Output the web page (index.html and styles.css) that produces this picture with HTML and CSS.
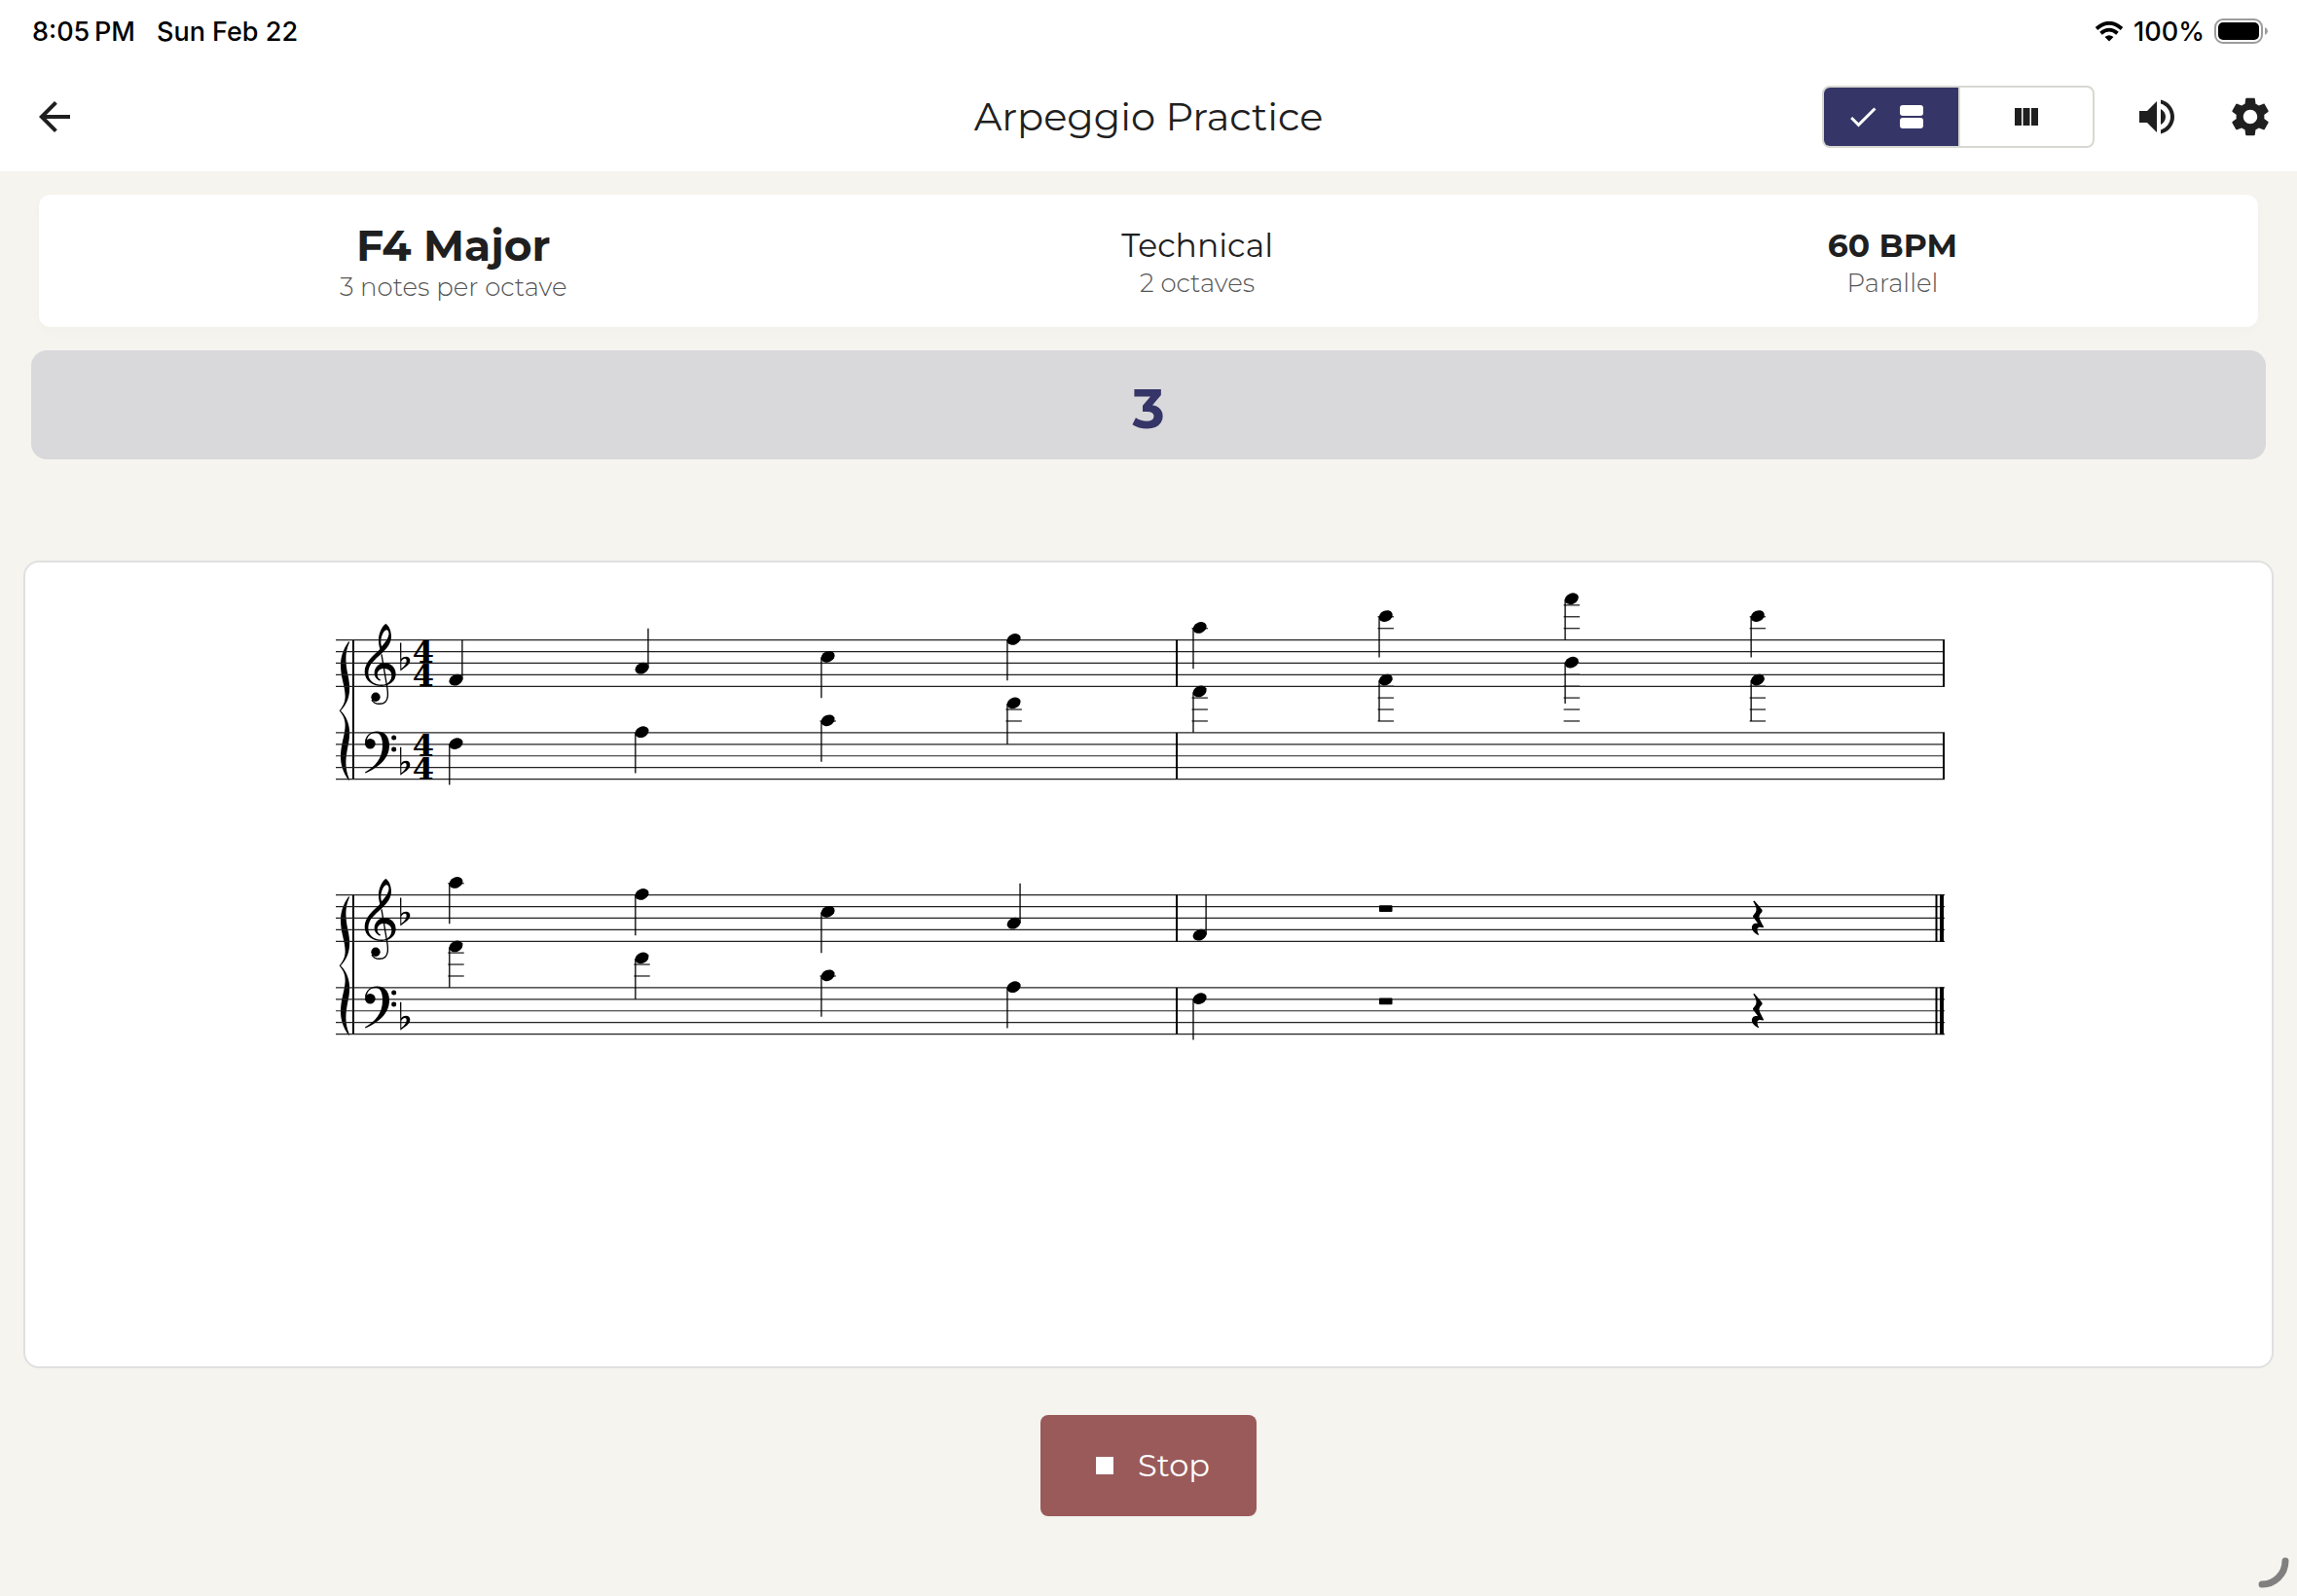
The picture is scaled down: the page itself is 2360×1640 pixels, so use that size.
FILE: index.html
```
<!DOCTYPE html>
<html lang="en">

<head>
    <meta charset="UTF-8">
    <meta name="viewport" content="width=device-width, initial-scale=1.0">
    <title>Arpeggio Practice</title>
    <link rel="stylesheet" href="styles.css">
</head>

<body>
    <!-- Status bar -->
    <div class="status-bar">
        <div class="status-left">
            <span>8:05&#8239;PM</span>
            <span>Sun Feb 22</span>
        </div>
        <div class="status-right">
            <svg class="wifi" viewBox="0 0 30 21" aria-hidden="true">
                <path d="M2 7.500Q15 -4 28 7.500M6.500 12.300Q15 5 23.500 12.300" fill="none" stroke="#000" stroke-width="3.800"/>
                <path d="M15 20.500l-4.500-4.500q4.500-3.500 9 0z"/>
            </svg>
            <span>100%</span>
            <svg class="battery" viewBox="0 0 56 26" aria-hidden="true">
                <rect x="1" y="1" width="48" height="24" rx="8" fill="none" stroke="#9c9c9c" stroke-width="2"/>
                <rect x="4" y="4" width="42" height="18" rx="5"/>
                <path d="M52 9q3 1.500 3 4t-3 4z" fill="#9c9c9c"/>
            </svg>
        </div>
    </div>

    <!-- App bar -->
    <header class="app-bar">
        <div class="bar-side">
            <button class="icon-button back" aria-label="Back">
                <svg class="icon" viewBox="0 0 24 24"><path d="M7.825 13l5.600 5.600L12 20l-8-8 8-8 1.425 1.400L7.825 11H20v2z"/></svg>
            </button>
        </div>
        <h1>Arpeggio Practice</h1>
        <div class="bar-side bar-actions">
            <div class="segmented" role="group" aria-label="Layout">
                <button class="segment selected" aria-pressed="true" aria-label="Staff view">
                    <svg class="check" viewBox="0 0 24 24"><path d="M9 16.170L4.830 12l-1.420 1.410L9 19 21 7l-1.410-1.410z"/></svg>
                    <svg class="view-icon" viewBox="0 0 24 24"><rect width="24" height="11" rx="3"/><rect y="13" width="24" height="11" rx="3"/></svg>
                </button>
                <button class="segment" aria-pressed="false" aria-label="Keyboard view">
                    <svg class="view-icon" viewBox="0 0 24 24"><path d="M0 3h7v18H0zM8.500 3h7v18h-7zM17 3h7v18h-7z"/></svg>
                </button>
            </div>
            <button class="icon-button" aria-label="Sound">
                <svg class="icon" viewBox="0 0 24 24"><path d="M3 9v6h4l5 5V4L7 9H3zm13.500 3c0-1.770-1.020-3.290-2.500-4.030v8.050c1.480-.730 2.500-2.250 2.500-4.020zM14 3.230v2.060c2.890.860 5 3.540 5 6.710s-2.110 5.850-5 6.710v2.060c4.010-.910 7-4.490 7-8.770s-2.990-7.860-7-8.770z"/></svg>
            </button>
            <button class="icon-button" aria-label="Settings">
                <svg class="icon" viewBox="0 0 24 24"><path d="M19.140 12.940c.040-.300.060-.610.060-.940 0-.320-.020-.640-.070-.940l2.030-1.580c.180-.140.230-.410.120-.610l-1.920-3.320c-.120-.220-.370-.290-.590-.220l-2.390.960c-.500-.380-1.030-.700-1.620-.940l-.360-2.540c-.040-.240-.240-.410-.480-.410h-3.840c-.240 0-.430.170-.470.410l-.360 2.540c-.590.240-1.130.570-1.620.940l-2.390-.960c-.220-.080-.470 0-.590.220L2.740 8.870c-.120.210-.080.470.120.610l2.030 1.580c-.050.300-.090.630-.090.940s.020.640.070.940l-2.030 1.580c-.180.140-.230.410-.120.610l1.920 3.320c.120.220.370.290.590.220l2.390-.960c.500.380 1.030.700 1.620.940l.360 2.540c.050.240.240.410.480.410h3.840c.240 0 .440-.170.470-.410l.360-2.540c.590-.240 1.130-.560 1.620-.940l2.390.960c.220.080.470 0 .590-.220l1.920-3.320c.120-.220.070-.470-.120-.610l-2.010-1.580zM12 15.600c-1.980 0-3.600-1.620-3.600-3.600s1.620-3.600 3.600-3.600 3.600 1.620 3.600 3.600-1.620 3.600-3.600 3.600z"/></svg>
            </button>
        </div>
    </header>

    <main>
        <section class="info-card">
            <div class="info">
                <h2 class="info-key">F4 Major</h2>
                <p class="info-sub">3 notes per octave</p>
            </div>
            <div class="info">
                <p class="info-title">Technical</p>
                <p class="info-sub">2 octaves</p>
            </div>
            <div class="info">
                <p class="info-title bold">60 BPM</p>
                <p class="info-sub">Parallel</p>
            </div>
        </section>

        <div class="countdown">3</div>

        <section class="score-card">
            <svg class="score" id="score" viewBox="345 600 1670 500" role="img" aria-label="F major arpeggio, two octaves, both hands">
                <defs>
                    <!-- glyphs are drawn at 3x -->
                    <g id="brace" transform="scale(.3333)">
                        <path d="M85 4L87 7C72 40 75 72 82 107C92 150 90 187 60 218C90 249 92 287 82 330C75 365 72 398 87 430L85 433C56 392 56 357 66 312C77 264 79 246 56 218C79 190 77 172 66 125C56 80 56 45 85 4Z"/>
                    </g>
                    <g id="treble-clef" transform="scale(.3333)">
                        <path fill-rule="evenodd" d="M199-50C188-44 176-20 177 2C177 13 179 21 181 28C165 45 134 66 134 98C134 126 158 142 187 142C212 142 230 126 230 105C230 84 214 71 196 71C176 71 164 86 164 102C164 115 172 124 182 126L183 123C176 119 173 113 173 106C173 96 181 88 193 88C208 88 217 97 217 109C217 126 204 138 187 138C160 138 145 122 145 103C145 75 165 62 187 41C205 24 216 10 216-12C216-28 209-45 199-50ZM202-31C209-29 211-18 205-6C200 4 194 12 186 20C182 5 184-9 190-20C194-27 198-31 202-31Z"/>
                        <path fill="none" stroke="#000" stroke-width="4" d="M186 44L201 133C205 153 206 163 205 174C203 190 192 197 180 197C169 197 160 193 156 184"/>
                        <circle cx="168" cy="176" r="14"/>
                    </g>
                    <g id="bass-clef" transform="scale(.3333)">
                        <path d="M135 32C134 12 150-4 172-4C196-4 210 12 210 39C210 80 176 107 136 125L135 122C165 104 189 80 189 39C189 15 182 0 168 0C154 0 144 9 141 22Z"/>
                        <circle cx="151" cy="34" r="16"/>
                        <circle cx="224" cy="15" r="7.500"/>
                        <circle cx="224" cy="51" r="7.500"/>
                    </g>
                    <g id="flat" transform="scale(.3333)">
                        <path fill-rule="evenodd" d="M243 9H247V58C254 49 274 47 274 63C274 78 256 86 244 96ZM247 66V88C256 81 263 73 263 64C263 54 252 56 247 66Z"/>
                    </g>
                    <g id="quarter-rest" transform="scale(.3333)">
                        <path d="M-14 20L-10 18L13 45Q16 49 13 53C7 59 4 64 5 70C8 79 13 88 19 99L16 101C9 98 1 99-1 104C-2 110 0 117 4 122L2 124C-7 120-18 111-18 101C-18 90-8 86 1 88L-14 68Q-16 64-12 61C-4 54-3 46-5 38C-7 31-11 25-14 20Z"/>
                    </g>
                    <g id="head"><ellipse rx="7.300" ry="5.500" transform="rotate(-25)"/></g>
                </defs>
            </svg>
        </section>

        <div class="controls">
            <button class="stop-button">
                <svg class="stop-icon" viewBox="0 0 24 24" aria-hidden="true"><path d="M6 6h12v12H6z"/></svg>
                Stop
            </button>
        </div>
    </main>

    <svg class="corner" viewBox="0 0 32 32" aria-hidden="true"><path d="M28 4A24 24 0 0 1 4 28"/></svg>

    <script src="score.js"></script>
</body>

</html>
```
FILE: score.js
```
// steps are counted down from the top line of each staff, null = no note
const systems = [
    {
        y: 657.6,
        time: true,
        treble: [7, 5, 3, 0, -2, -4, -7, -4],
        bass: [2, 0, -2, -5, -7, -9, -12, -9]
    },
    {
        y: 919.6,
        last: true,
        treble: [-2, 0, 3, 5, 7, 'half', null, 'quarter'],
        bass: [-7, -5, -2, 0, 2, 'half', null, 'quarter']
    }
];

const SPACE = 11.93;
const STEP = SPACE / 2;
const BASS = 95.3;
const LEFT = 345;
const RIGHT = 1998;
const FIRST_NOTE = 468.5;
const NOTE_GAP = 191.05;

function line(x1, y1, x2, y2, width, color = '#000') {
    return `<line x1="${x1}" y1="${y1}" x2="${x2}" y2="${y2}" stroke="${color}" stroke-width="${width}"/>`;
}

function drawNote(x, top, step, isTreble) {
    const y = top + step * STEP;
    let out = '';
    for (let s = -2; s >= step; s -= 2) {
        out += line(x - 8.2, top + s * STEP, x + 8.2, top + s * STEP, 1.4, '#333');
    }
    if (isTreble && step > 4) {
        out += line(x + 6.4, y - 1, x + 6.4, y - 41.7, 1.3);
    } else {
        out += line(x - 6.7, y, x - 6.7, y + 41.7, 1.3);
    }
    return out + `<use href="#head" x="${x}" y="${y - 0.7}"/>`;
}

function drawStaff(system, top, notes, isTreble) {
    const height = SPACE * 4;
    let out = '';
    for (let i = 0; i < 5; i++) {
        out += line(LEFT, top + i * SPACE, RIGHT, top + i * SPACE, 1.2, '#222');
    }
    out += `<use href="#${isTreble ? 'treble-clef' : 'bass-clef'}" x="330" y="${top}"/>`;
    out += `<use href="#flat" x="330" y="${isTreble ? top : top + SPACE}"/>`;
    if (system.time) {
        out += `<text class="time"><tspan x="435" y="${top + SPACE * 2}">4</tspan><tspan x="435" y="${top + SPACE * 4}">4</tspan></text>`;
    }
    notes.forEach((note, i) => {
        const x = FIRST_NOTE + i * NOTE_GAP;
        if (note === 'half') {
            out += `<rect x="${x - 6.8}" y="${top + 10.6}" width="13.600" height="6.800" rx="1"/>`;
        } else if (note === 'quarter') {
            out += `<use href="#quarter-rest" x="${x}" y="${top}"/>`;
        } else if (note !== null) {
            out += drawNote(x, top, note, isTreble);
        }
    });
    out += line(1209, top, 1209, top + height, 2);
    if (system.last) {
        out += line(1989.5, top, 1989.5, top + height, 2);
        out += line(1995, top - 0.5, 1995, top + height + 0.5, 4);
    } else {
        out += line(1997, top, 1997, top + height, 2);
    }
    return out;
}

let music = '';
systems.forEach(system => {
    music += `<use href="#brace" x="330" y="${system.y}"/>`;
    music += line(363, system.y, 363, system.y + BASS + SPACE * 4, 2);
    music += drawStaff(system, system.y, system.treble, true);
    music += drawStaff(system, system.y + BASS, system.bass, false);
});
document.getElementById('score').insertAdjacentHTML('beforeend', music);
```
FILE: styles.css
```
* {
    box-sizing: border-box;
}

body {
    margin: 0;
    min-height: 100vh;
    display: flex;
    flex-direction: column;
    font-family: Montserrat, Inter, sans-serif;
    background-color: #f5f4ef;
    color: #1f1f1f;
}

h1, h2, p {
    margin: 0;
}

button {
    font-family: inherit;
    color: inherit;
    border: none;
    background: none;
    padding: 0;
    cursor: pointer;
}

svg {
    display: block;
    fill: currentColor;
}

/* Status bar */
.status-bar {
    height: 64px;
    padding: 0 29px 0 33px;
    display: flex;
    align-items: center;
    justify-content: space-between;
    background-color: #fff;
    color: #000;
    font-family: Inter, sans-serif;
    font-size: 27px;
    font-weight: 500;
}

.status-left {
    display: flex;
    gap: 22px;
}

.status-right {
    display: flex;
    align-items: center;
    gap: 10px;
}

.wifi {
    width: 30px;
    height: 21px;
}

.battery {
    width: 56px;
    height: 26px;
}

/* App bar */
.app-bar {
    height: 112px;
    display: flex;
    align-items: center;
    background-color: #fff;
}

.app-bar h1 {
    font-size: 40px;
    line-height: 48px;
    font-weight: 400;
}

.bar-side {
    flex: 1;
    display: flex;
    align-items: center;
}

.bar-actions {
    justify-content: flex-end;
}

.icon-button {
    width: 96px;
    height: 96px;
    display: flex;
    align-items: center;
    justify-content: center;
}

.back {
    width: 112px;
}

.icon {
    width: 48px;
    height: 48px;
}

.segmented {
    display: flex;
    width: 280px;
    height: 64px;
    margin-right: 16px;
    border: 2px solid #d8d8d2;
    border-radius: 8px;
    overflow: hidden;
}

.segment {
    width: 50%;
    display: flex;
    align-items: center;
    justify-content: center;
    gap: 20px;
}

.segment + .segment {
    border-left: 2px solid #d8d8d2;
}

.selected {
    padding-right: 14px;
    background-color: #363567;
    color: #fff;
}

.check {
    width: 36px;
    height: 36px;
}

.view-icon {
    width: 24px;
    height: 24px;
}

/* Content */
main {
    flex: 1;
    display: flex;
    flex-direction: column;
    padding: 24px 24px 82px;
}

.info-card {
    display: flex;
    align-items: center;
    justify-content: space-around;
    margin: 0 16px;
    padding: 26px 24px 24px;
    border-radius: 12px;
    background-color: #fff;
    box-shadow: 0 4px 16px rgba(0, 0, 0, 0.02);
    text-align: center;
}

.info-key {
    font-size: 44px;
    line-height: 52px;
    font-weight: 700;
}

.info-title {
    font-size: 33px;
    line-height: 44px;
    font-weight: 400;
}

.bold {
    font-weight: 700;
}

.info-sub {
    font-size: 26px;
    line-height: 34px;
    font-weight: 300;
    color: #555;
}

.countdown {
    margin: 24px 8px 104px;
    padding: 26px 0 18px;
    border-radius: 16px;
    background-color: #d9d9db;
    color: #363567;
    font-size: 56px;
    line-height: 68px;
    font-weight: 700;
    text-align: center;
}

.score-card {
    flex: 1;
    padding: 22px 24px;
    border: 2px solid #e0e0e0;
    border-radius: 16px;
    background-color: #fff;
}

.score {
    width: 100%;
    max-width: 1670px;
    margin: 0 auto;
    fill: #000;
}

.time {
    font-family: "DejaVu Serif", serif;
    font-size: 32px;
    font-weight: 700;
    text-anchor: middle;
}

.controls {
    display: flex;
    justify-content: center;
    padding-top: 48px;
}

.stop-button {
    display: flex;
    align-items: center;
    gap: 16px;
    height: 104px;
    padding: 0 48px;
    border-radius: 8px;
    background-color: #9a5a5a;
    color: #fff;
    font-size: 32px;
    line-height: 40px;
    font-weight: 400;
}

.stop-icon {
    width: 36px;
    height: 36px;
}

.corner {
    position: absolute;
    right: 8px;
    bottom: 8px;
    width: 32px;
    height: 32px;
    fill: none;
    stroke: #808080;
    stroke-width: 7px;
    stroke-linecap: round;
}
```
